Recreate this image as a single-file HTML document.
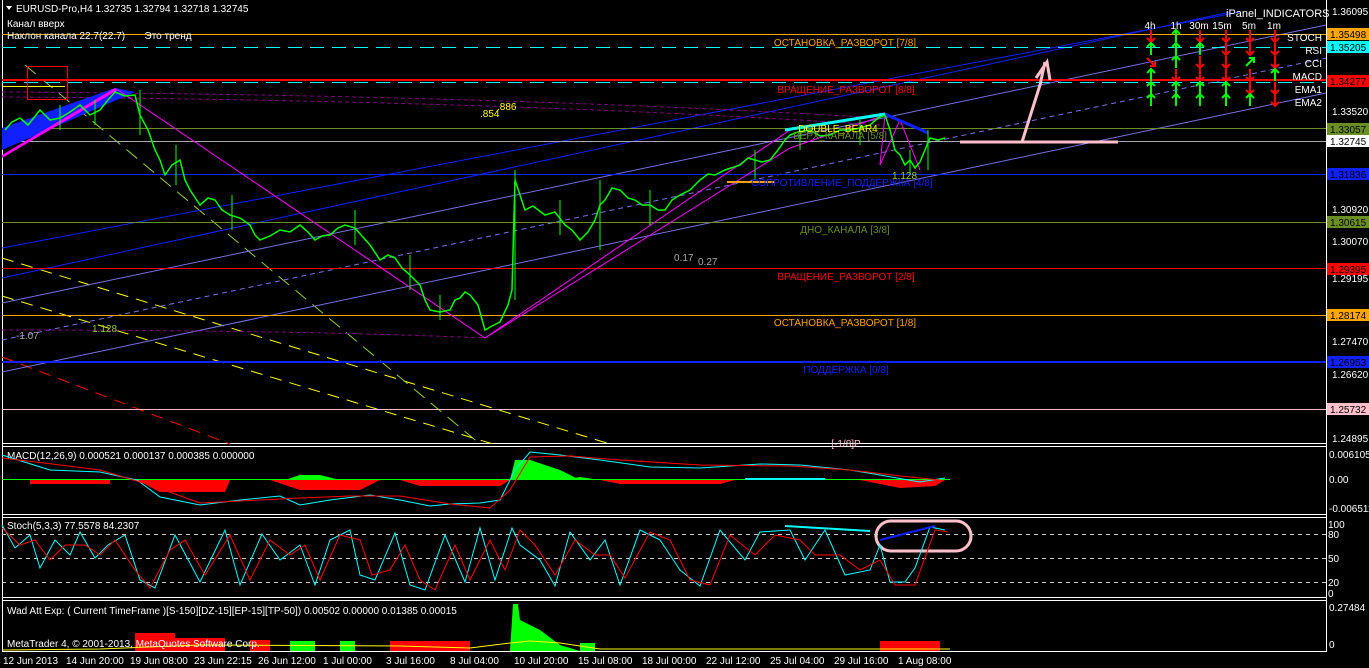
<!DOCTYPE html>
<html><head><meta charset="utf-8"><style>
html,body{margin:0;padding:0;background:#000;width:1369px;height:668px;overflow:hidden}
svg{display:block}
text{font-family:"Liberation Sans",sans-serif;font-size:10px}
</style></head><body>
<svg width="1369" height="668" viewBox="0 0 1369 668">
<defs>
<path id="up" d="M0 -6 L0 6 M-4 -2 L0 -6 L4 -2" stroke="#0f0" stroke-width="2" fill="none"/>
<path id="dn" d="M0 -6 L0 6 M-4 2 L0 6 L4 2" stroke="#f00" stroke-width="2" fill="none"/>
</defs>
<rect width="1369" height="668" fill="#000"/>
<g stroke="#fff" stroke-width="1" fill="none">
<line x1="2.5" y1="0" x2="2.5" y2="652"/>
<line x1="1326.5" y1="0" x2="1326.5" y2="652"/>
<line x1="2" y1="443.5" x2="1327" y2="443.5"/><line x1="2" y1="446.5" x2="1327" y2="446.5"/>
<line x1="2" y1="514.5" x2="1327" y2="514.5"/><line x1="2" y1="517.5" x2="1327" y2="517.5"/>
<line x1="2" y1="597.5" x2="1327" y2="597.5"/><line x1="2" y1="600.5" x2="1327" y2="600.5"/>
<line x1="2" y1="651.5" x2="1327" y2="651.5"/>
</g>
<g fill="none" stroke-width="1">
<line x1="2" y1="258" x2="610" y2="444" stroke="#ff0" stroke-dasharray="12,8"/>
<line x1="2" y1="296" x2="493" y2="444" stroke="#ff0" stroke-dasharray="12,8"/>
<line x1="2" y1="357" x2="230" y2="444" stroke="#f00" stroke-dasharray="12,8"/>
<line x1="25" y1="65" x2="480" y2="444" stroke="#9acd32" stroke-dasharray="14,8"/>
<line x1="2" y1="278" x2="1230" y2="12" stroke="#1020ff"/>
<line x1="2" y1="248" x2="1240" y2="12" stroke="#1020ff"/>
<line x1="2" y1="372" x2="1326" y2="93" stroke="#7a70e0"/>
<line x1="2" y1="303" x2="1326" y2="25" stroke="#7a70e0"/>
<line x1="2" y1="340" x2="1326" y2="58" stroke="#7a70e0" stroke-dasharray="5,4"/>
<path d="M2 330 Q300 330 485 338" stroke="#800080" stroke-dasharray="4,3"/>
<path d="M2 92 Q500 95 880 118" stroke="#800080" stroke-dasharray="4,3"/>
<path d="M2 97 Q500 100 880 125" stroke="#800080" stroke-dasharray="4,3"/>
</g>
<g stroke-width="1">
<line x1="2" y1="34.5" x2="1326" y2="34.5" stroke="#ffa500"/>
<line x1="2" y1="47.5" x2="1326" y2="47.5" stroke="#0ff" stroke-dasharray="14,8"/>
<line x1="2" y1="80" x2="1326" y2="80" stroke="#f00" stroke-width="2"/>
<line x1="2" y1="82.5" x2="1326" y2="82.5" stroke="#0ff" stroke-dasharray="14,8"/>
<line x1="2" y1="86.5" x2="65" y2="86.5" stroke="#ff0"/>
<line x1="2" y1="128.5" x2="1326" y2="128.5" stroke="#6b8e23"/>
<line x1="2" y1="141.5" x2="1326" y2="141.5" stroke="#aaa"/>
<line x1="2" y1="174.5" x2="1326" y2="174.5" stroke="#1020ff"/>
<line x1="2" y1="222.5" x2="1326" y2="222.5" stroke="#6b8e23"/>
<line x1="2" y1="268.5" x2="1326" y2="268.5" stroke="#f00"/>
<line x1="2" y1="315.5" x2="1326" y2="315.5" stroke="#ffa500"/>
<line x1="2" y1="362" x2="1326" y2="362" stroke="#1020ff" stroke-width="2"/>
<line x1="2" y1="409.5" x2="1326" y2="409.5" stroke="#ffc0cb"/>
</g>
<rect x="27.5" y="66.5" width="40" height="33" fill="none" stroke="#f00"/>
<polygon points="2,150 2,128 115,88 135,92" fill="#1020ff"/>
<polygon points="2,155 115,88 118,90 2,158" fill="#f0f"/>
<g fill="none" stroke="#f0f" stroke-width="1">
<polyline points="118,90 485,338 790,148 885,115 880,165 900,120 920,170"/>
<polyline points="485,338 790,130"/>
</g>
<polyline points="785,130 885,114" stroke="#0ff" stroke-width="3" fill="none"/>
<polyline points="885,114 928,133" stroke="#1020ff" stroke-width="3" fill="none"/>
<line x1="727" y1="182" x2="775" y2="182" stroke="#ffa500" stroke-width="2"/>
<polyline fill="none" stroke="#0f0" stroke-width="1.5" points="5,130 12,122 20,118 28,125 40,110 50,120 60,118 70,112 80,105 90,115 100,110 108,100 115,92 125,96 135,95 140,115 148,130 155,150 160,160 165,175 172,165 180,160 185,180 190,190 200,205 208,198 215,200 222,210 230,215 240,218 250,225 255,235 260,240 270,236 280,230 290,232 300,225 308,232 315,240 322,236 330,235 338,228 345,225 355,228 362,236 370,245 380,260 388,255 395,258 402,268 410,275 420,285 425,300 430,310 440,312 450,310 455,300 460,298 465,292 470,295 478,305 485,330 492,326 500,322 508,305 512,290 515,180 520,195 525,210 533,206 545,215 555,212 565,225 572,230 580,240 588,232 595,220 600,205 605,200 612,188 620,190 628,198 635,200 642,205 650,205 658,210 665,210 672,200 680,195 690,190 700,180 708,174 715,175 725,170 740,165 748,158 755,160 762,162 770,160 778,150 785,140 790,135 798,132 810,130 820,136 830,135 840,130 850,130 860,128 870,125 878,118 885,115 890,130 895,150 900,155 905,165 910,160 915,168 920,162 925,150 930,138 938,140 945,138"/>
<g stroke="#0f0" stroke-width="1">
<line x1="515" y1="170" x2="515" y2="300"/><line x1="140" y1="90" x2="140" y2="135"/><line x1="410" y1="255" x2="410" y2="290"/>
<line x1="928" y1="130" x2="928" y2="170"/><line x1="600" y1="180" x2="600" y2="250"/><line x1="176" y1="145" x2="176" y2="185"/>
<line x1="232" y1="195" x2="232" y2="230"/><line x1="355" y1="210" x2="355" y2="245"/><line x1="440" y1="295" x2="440" y2="320"/>
<line x1="560" y1="200" x2="560" y2="235"/><line x1="650" y1="190" x2="650" y2="225"/><line x1="755" y1="150" x2="755" y2="180"/><line x1="800" y1="125" x2="800" y2="150"/><line x1="860" y1="120" x2="860" y2="145"/><line x1="910" y1="150" x2="910" y2="175"/>
<line x1="60" y1="105" x2="60" y2="130"/><line x1="95" y1="100" x2="95" y2="125"/>
</g>
<line x1="960" y1="142" x2="1118" y2="142" stroke="#ffc0cb" stroke-width="3"/>
<path d="M1022 142 L1040 85 L1045 62 M1036 78 L1047 62 L1050 80" stroke="#ffc0cb" stroke-width="3" fill="none"/>
<rect x="876" y="521" width="95" height="30" rx="15" fill="none" stroke="#ffc0cb" stroke-width="3"/>
<g text-anchor="middle">
<text x="845" y="46" fill="#ffa500">ОСТАНОВКА_РАЗВОРОТ [7/8]</text>
<text x="846" y="93" fill="#f00">ВРАЩЕНИЕ_РАЗВОРОТ [8/8]</text>
<text x="838" y="132" fill="#ff0">DOUBLE_BEAR4</text>
<text x="840" y="139" fill="#6b8e23">ВЕРХ_КАНАЛА [5/8]</text>
<text x="842" y="186" fill="#1020ff">СОПРОТИВЛЕНИЕ_ПОДДЕРЖКА [4/8]</text>
<text x="845" y="233" fill="#6b8e23">ДНО_КАНАЛА [3/8]</text>
<text x="846" y="280" fill="#f00">ВРАЩЕНИЕ_РАЗВОРОТ [2/8]</text>
<text x="845" y="326" fill="#ffa500">ОСТАНОВКА_РАЗВОРОТ [1/8]</text>
<text x="846" y="373" fill="#1020ff">ПОДДЕРЖКА [0/8]</text>
<text x="846" y="447" fill="#ffc0cb">[-1/8]P</text>
</g>
<text x="497" y="110" fill="#ff0">.886</text>
<text x="480" y="117" fill="#ff0">.854</text>
<text x="674" y="261" fill="#aaa">0.17</text>
<text x="698" y="265" fill="#aaa">0.27</text>
<text x="92" y="332" fill="#9acd32">1.128</text>
<text x="16" y="339" fill="#aaa">-1.07</text>
<text x="892" y="179" fill="#9acd32">1.128</text>
<path d="M6 6 L12 6 L9 10 Z" fill="#fff"/>
<text x="16" y="12" fill="#fff">EURUSD-Pro,H4  1.32735 1.32794 1.32718 1.32745</text>
<text x="7" y="27" fill="#fff">Канал  вверх</text>
<text x="7" y="39" fill="#fff" xml:space="preserve">Наклон канала 22.7(22.7)       Это тренд</text>
<text x="1226" y="17" fill="#fff" style="font-size:11px">iPanel_INDICATORS</text>
<g fill="#fff" text-anchor="middle" style="font-size:11px">
<text x="1150" y="29">4h</text><text x="1176" y="29">1h</text><text x="1199" y="29">30m</text><text x="1222" y="29">15m</text><text x="1249" y="29">5m</text><text x="1274" y="29">1m</text>
</g>
<g fill="#fff" text-anchor="end" style="font-size:12px">
<text x="1322" y="41">STOCH</text><text x="1322" y="54">RSI</text><text x="1322" y="67">CCI</text><text x="1322" y="80">MACD</text><text x="1322" y="93">EMA1</text><text x="1322" y="106">EMA2</text>
</g>
<use href="#dn" x="1151" y="36"/><use href="#up" x="1176" y="36"/><use href="#dn" x="1200" y="36"/><use href="#dn" x="1226" y="36"/><use href="#dn" x="1250" y="36"/><use href="#dn" x="1275" y="36"/>
<use href="#up" x="1151" y="49"/><use href="#up" x="1176" y="49"/><use href="#up" x="1200" y="49"/><use href="#dn" x="1226" y="49"/><use href="#dn" x="1250" y="49"/><use href="#dn" x="1275" y="49"/>
<path d="M1147 58 L1155 66 M1150 66 L1155 66 L1155 61" stroke="#f00" stroke-width="2" fill="none"/>
<use href="#up" x="1176" y="62"/><use href="#dn" x="1200" y="62"/><use href="#dn" x="1226" y="62"/>
<path d="M1246 66 L1254 58 M1249 58 L1254 58 L1254 63" stroke="#0f0" stroke-width="2" fill="none"/><use href="#dn" x="1275" y="62"/>
<use href="#up" x="1151" y="75"/><use href="#dn" x="1176" y="75"/><use href="#dn" x="1200" y="75"/><use href="#dn" x="1226" y="75"/><use href="#dn" x="1250" y="75"/><use href="#up" x="1275" y="75"/>
<use href="#up" x="1151" y="88"/><use href="#up" x="1176" y="88"/><use href="#up" x="1200" y="88"/><use href="#up" x="1226" y="88"/><use href="#dn" x="1250" y="88"/><use href="#dn" x="1275" y="88"/>
<use href="#up" x="1151" y="100"/><use href="#up" x="1176" y="100"/><use href="#up" x="1200" y="100"/><use href="#up" x="1226" y="100"/><use href="#up" x="1250" y="100"/><use href="#dn" x="1275" y="100"/>
<rect x="1327" y="28" width="42" height="12" fill="#ffa500"/>
<rect x="1327" y="41" width="42" height="12" fill="#0ff"/>
<rect x="1327" y="75" width="42" height="12" fill="#f00"/>
<rect x="1327" y="123" width="42" height="12" fill="#6b8e23"/>
<rect x="1327" y="135" width="42" height="12" fill="#fff"/>
<rect x="1327" y="168" width="42" height="12" fill="#1020ff"/>
<rect x="1327" y="216" width="42" height="12" fill="#6b8e23"/>
<rect x="1327" y="263" width="42" height="12" fill="#f00"/>
<rect x="1327" y="309" width="42" height="12" fill="#ffa500"/>
<rect x="1327" y="356" width="42" height="12" fill="#1020ff"/>
<rect x="1327" y="403" width="42" height="12" fill="#ffc0cb"/>
<g fill="#fff"><text x="1332" y="15">1.36095</text><text x="1332" y="115">1.33520</text><text x="1332" y="213">1.30920</text><text x="1332" y="245">1.30070</text><text x="1332" y="282">1.29195</text><text x="1332" y="345">1.27470</text><text x="1332" y="378">1.26620</text><text x="1332" y="442">1.24895</text></g>
<g fill="#000"><text x="1330" y="38">1.35498</text><text x="1330" y="51">1.35205</text><text x="1330" y="85">1.34277</text><text x="1330" y="133">1.33057</text><text x="1330" y="145">1.32745</text><text x="1330" y="178">1.31836</text><text x="1330" y="226">1.30615</text><text x="1330" y="273">1.29395</text><text x="1330" y="319">1.28174</text><text x="1330" y="366">1.26953</text><text x="1330" y="413">1.25732</text></g>
<g fill="#fff"><text x="1329" y="458">0.006105</text><text x="1329" y="483">0.00</text><text x="1329" y="512">-0.006511</text>
<text x="1328" y="528">100</text><text x="1328" y="538">80</text><text x="1328" y="562">50</text><text x="1328" y="586">20</text><text x="1328" y="597">0</text>
<text x="1329" y="611">0.27484</text><text x="1329" y="648">0</text></g>
<text x="7" y="459" fill="#fff">MACD(12,26,9) 0.000521 0.000137 0.000385 0.000000</text>
<line x1="2" y1="479.5" x2="950" y2="479.5" stroke="#0f0"/>
<g fill="#f00"><polygon points="30,480 110,480 110,484 30,484"/><polygon points="137,480 230,480 225,492 160,492"/><polygon points="270,480 380,480 360,490 300,490"/><polygon points="400,480 510,480 500,486 420,486"/><polygon points="600,480 735,480 720,484 620,484"/><polygon points="860,480 945,480 935,486 900,488"/></g>
<g fill="#0f0"><polygon points="510,480 515,460 530,460 560,470 580,480"/><polygon points="285,480 300,475 320,475 340,480"/><polygon points="560,480 580,477 600,480"/></g>
<line x1="745" y1="479" x2="825" y2="479" stroke="#0ff" stroke-width="2"/>
<polyline fill="none" stroke="#0ff" points="2,455 50,470 100,472 137,480 160,497 200,505 240,500 280,496 300,505 330,500 370,495 400,500 430,506 450,504 480,503 500,500 515,470 530,452 560,455 600,460 650,467 700,468 760,464 800,465 850,470 880,475 920,482 945,478"/>
<polyline fill="none" stroke="#f00" points="2,458 60,465 100,470 150,485 200,503 260,500 300,498 350,496 400,496 450,504 490,508 510,490 530,457 570,456 620,460 700,465 790,466 850,470 900,476 940,480"/>
<text x="7" y="529" fill="#fff">Stoch(5,3,3) 77.5578 84.2307</text>
<g stroke="#ccc" stroke-dasharray="4,4"><line x1="2" y1="534.5" x2="1326" y2="534.5"/><line x1="2" y1="558.5" x2="1326" y2="558.5"/><line x1="2" y1="582.5" x2="1326" y2="582.5"/></g>
<polyline fill="none" stroke="#0ff" points="2,525 15,548 30,535 40,568 55,540 70,555 80,532 95,558 108,545 125,535 140,580 155,588 175,535 200,582 225,530 240,585 262,534 280,560 300,545 315,585 330,540 350,530 360,575 375,580 395,533 410,585 425,590 445,535 465,582 480,528 495,580 512,528 520,545 540,560 555,586 570,532 590,560 605,540 620,585 640,530 660,540 680,570 700,586 720,530 745,560 760,532 790,530 805,560 825,530 845,575 870,570 880,545 890,582 905,582 915,568 930,527 945,530"/>
<polyline fill="none" stroke="#f00" points="2,528 20,545 35,540 50,560 65,545 85,545 100,555 115,540 135,570 150,588 170,550 185,540 205,575 230,535 250,580 270,540 290,555 305,545 320,580 340,535 360,540 372,575 390,570 405,545 420,580 435,590 455,545 470,580 490,540 505,570 520,530 535,545 555,575 575,540 595,555 610,555 625,578 650,532 670,540 690,580 710,585 730,535 755,555 775,535 800,540 815,555 840,555 860,570 880,560 895,585 915,585 935,530 948,532"/>
<line x1="785" y1="526" x2="870" y2="531" stroke="#0ff" stroke-width="2"/>
<line x1="880" y1="540" x2="935" y2="526" stroke="#1020ff" stroke-width="2"/>
<text x="7" y="614" fill="#fff">Wad Att Exp: ( Current TimeFrame )[S-150][DZ-15][EP-15][TP-50]) 0.00502 0.00000 0.01385 0.00015</text>
<g fill="#f00"><rect x="135" y="633" width="40" height="18"/><rect x="175" y="638" width="50" height="13"/><rect x="250" y="640" width="20" height="11"/><rect x="390" y="641" width="80" height="10"/><rect x="880" y="641" width="60" height="10"/></g>
<g fill="#0f0"><polygon points="510,651 513,604 518,604 520,620 540,630 560,645 580,651"/><rect x="290" y="641" width="25" height="10"/><rect x="580" y="643" width="15" height="8"/><rect x="340" y="641" width="15" height="10"/></g>
<polyline fill="none" stroke="#ff0" points="2,650 100,649 200,645 400,646 470,648 510,643 530,641 560,643 600,649 950,649"/>
<text x="7" y="647" fill="#fff">MetaTrader 4, © 2001-2013, MetaQuotes Software Corp.</text>
<g fill="#fff">
<text x="3" y="664">12 Jun 2013</text><text x="66" y="664">14 Jun 20:00</text><text x="130" y="664">19 Jun 08:00</text><text x="194" y="664">23 Jun 22:15</text><text x="258" y="664">26 Jun 12:00</text><text x="323" y="664">1 Jul 00:00</text><text x="386" y="664">3 Jul 16:00</text><text x="450" y="664">8 Jul 04:00</text><text x="514" y="664">10 Jul 20:00</text><text x="578" y="664">15 Jul 08:00</text><text x="642" y="664">18 Jul 00:00</text><text x="706" y="664">22 Jul 12:00</text><text x="770" y="664">25 Jul 04:00</text><text x="834" y="664">29 Jul 16:00</text><text x="898" y="664">1 Aug 08:00</text>
</g>
</svg>
</body></html>
